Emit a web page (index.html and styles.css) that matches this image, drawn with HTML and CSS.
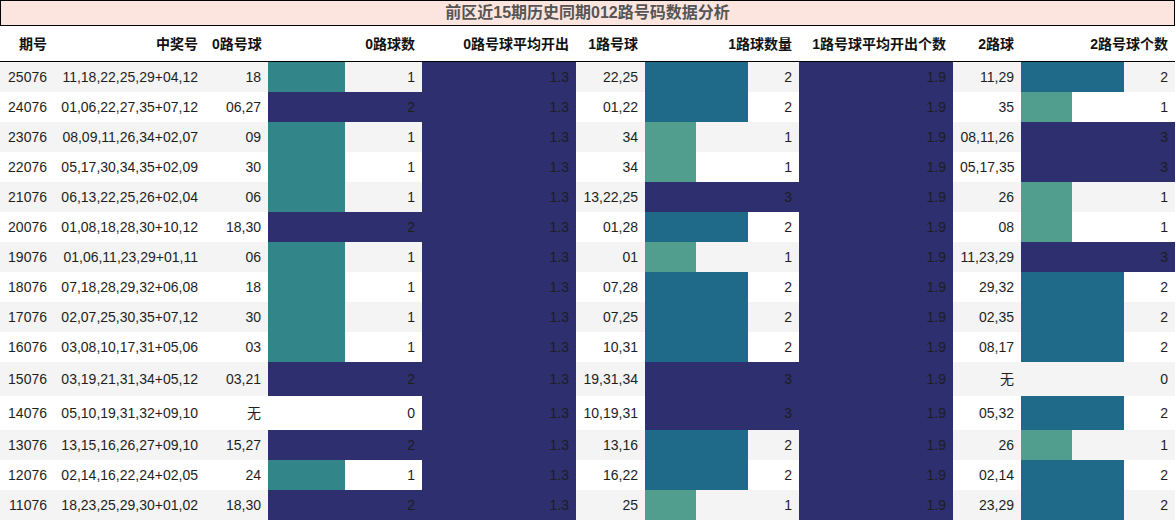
FILE: index.html
```html
<!DOCTYPE html>
<html lang="zh">
<head>
<meta charset="utf-8">
<title>012路号码数据分析</title>
<link rel="stylesheet" href="styles.css">
</head>
<body>
<div class="title">前区近15期历史同期012路号码数据分析</div>
<table class="grid">
  <colgroup>
    <col class="c-issue"><col class="c-nums"><col class="c-road"><col class="c-bar"><col class="c-bar">
    <col class="c-road1"><col class="c-bar"><col class="c-bar"><col class="c-road2"><col class="c-bar">
  </colgroup>
  <thead>
    <tr>
      <th>期号</th><th>中奖号</th><th>0路号球</th><th>0路球数</th><th>0路号球平均开出</th>
      <th>1路号球</th><th>1路球数量</th><th>1路号球平均开出个数</th><th>2路球</th><th>2路号球个数</th>
    </tr>
  </thead>
  <tbody>
    <tr><td>25076</td><td>11,18,22,25,29+04,12</td><td>18</td><td class="bar b2-1" style="--w:50%">1</td><td class="bar avg">1.3</td><td>22,25</td><td class="bar b3-2" style="--w:66.67%">2</td><td class="bar avg">1.9</td><td>11,29</td><td class="bar b3-2" style="--w:66.67%">2</td></tr>
    <tr><td>24076</td><td>01,06,22,27,35+07,12</td><td>06,27</td><td class="bar top">2</td><td class="bar avg">1.3</td><td>01,22</td><td class="bar b3-2" style="--w:66.67%">2</td><td class="bar avg">1.9</td><td>35</td><td class="bar b3-1" style="--w:33.33%">1</td></tr>
    <tr><td>23076</td><td>08,09,11,26,34+02,07</td><td>09</td><td class="bar b2-1" style="--w:50%">1</td><td class="bar avg">1.3</td><td>34</td><td class="bar b3-1" style="--w:33.33%">1</td><td class="bar avg">1.9</td><td>08,11,26</td><td class="bar top">3</td></tr>
    <tr><td>22076</td><td>05,17,30,34,35+02,09</td><td>30</td><td class="bar b2-1" style="--w:50%">1</td><td class="bar avg">1.3</td><td>34</td><td class="bar b3-1" style="--w:33.33%">1</td><td class="bar avg">1.9</td><td>05,17,35</td><td class="bar top">3</td></tr>
    <tr><td>21076</td><td>06,13,22,25,26+02,04</td><td>06</td><td class="bar b2-1" style="--w:50%">1</td><td class="bar avg">1.3</td><td>13,22,25</td><td class="bar top">3</td><td class="bar avg">1.9</td><td>26</td><td class="bar b3-1" style="--w:33.33%">1</td></tr>
    <tr><td>20076</td><td>01,08,18,28,30+10,12</td><td>18,30</td><td class="bar top">2</td><td class="bar avg">1.3</td><td>01,28</td><td class="bar b3-2" style="--w:66.67%">2</td><td class="bar avg">1.9</td><td>08</td><td class="bar b3-1" style="--w:33.33%">1</td></tr>
    <tr><td>19076</td><td>01,06,11,23,29+01,11</td><td>06</td><td class="bar b2-1" style="--w:50%">1</td><td class="bar avg">1.3</td><td>01</td><td class="bar b3-1" style="--w:33.33%">1</td><td class="bar avg">1.9</td><td>11,23,29</td><td class="bar top">3</td></tr>
    <tr><td>18076</td><td>07,18,28,29,32+06,08</td><td>18</td><td class="bar b2-1" style="--w:50%">1</td><td class="bar avg">1.3</td><td>07,28</td><td class="bar b3-2" style="--w:66.67%">2</td><td class="bar avg">1.9</td><td>29,32</td><td class="bar b3-2" style="--w:66.67%">2</td></tr>
    <tr><td>17076</td><td>02,07,25,30,35+07,12</td><td>30</td><td class="bar b2-1" style="--w:50%">1</td><td class="bar avg">1.3</td><td>07,25</td><td class="bar b3-2" style="--w:66.67%">2</td><td class="bar avg">1.9</td><td>02,35</td><td class="bar b3-2" style="--w:66.67%">2</td></tr>
    <tr><td>16076</td><td>03,08,10,17,31+05,06</td><td>03</td><td class="bar b2-1" style="--w:50%">1</td><td class="bar avg">1.3</td><td>10,31</td><td class="bar b3-2" style="--w:66.67%">2</td><td class="bar avg">1.9</td><td>08,17</td><td class="bar b3-2" style="--w:66.67%">2</td></tr>
    <tr class="tall"><td>15076</td><td>03,19,21,31,34+05,12</td><td>03,21</td><td class="bar top">2</td><td class="bar avg">1.3</td><td>19,31,34</td><td class="bar top">3</td><td class="bar avg">1.9</td><td>无</td><td>0</td></tr>
    <tr class="tall"><td>14076</td><td>05,10,19,31,32+09,10</td><td>无</td><td>0</td><td class="bar avg">1.3</td><td>10,19,31</td><td class="bar top">3</td><td class="bar avg">1.9</td><td>05,32</td><td class="bar b3-2" style="--w:66.67%">2</td></tr>
    <tr><td>13076</td><td>13,15,16,26,27+09,10</td><td>15,27</td><td class="bar top">2</td><td class="bar avg">1.3</td><td>13,16</td><td class="bar b3-2" style="--w:66.67%">2</td><td class="bar avg">1.9</td><td>26</td><td class="bar b3-1" style="--w:33.33%">1</td></tr>
    <tr><td>12076</td><td>02,14,16,22,24+02,05</td><td>24</td><td class="bar b2-1" style="--w:50%">1</td><td class="bar avg">1.3</td><td>16,22</td><td class="bar b3-2" style="--w:66.67%">2</td><td class="bar avg">1.9</td><td>02,14</td><td class="bar b3-2" style="--w:66.67%">2</td></tr>
    <tr><td>11076</td><td>18,23,25,29,30+01,02</td><td>18,30</td><td class="bar top">2</td><td class="bar avg">1.3</td><td>25</td><td class="bar b3-1" style="--w:33.33%">1</td><td class="bar avg">1.9</td><td>23,29</td><td class="bar b3-2" style="--w:66.67%">2</td></tr>
  </tbody>
</table>
</body>
</html>
```
FILE: styles.css
```css
html, body {
  margin: 0;
  padding: 0;
  background: #ffffff;
}

body {
  font-family: "Liberation Sans", "Noto Sans CJK SC", sans-serif;
  color: #1e1e1e;
  width: 1176px;
}

.title {
  box-sizing: border-box;
  width: 1175px;
  height: 26px;
  border: 1px solid #000;
  background: #fde5df;
  color: #555555;
  font-size: 16px;
  font-weight: bold;
  line-height: 24px;
  text-align: center;
}

.grid {
  width: 1175px;
  table-layout: fixed;
  border-collapse: separate;
  border-spacing: 0;
  font-size: 14px;
}

.c-issue { width: 54px; }
.c-nums { width: 151px; }
.c-road { width: 63px; }
.c-bar { width: 154px; }
.c-road1 { width: 69px; }
.c-road2 { width: 68px; }

.grid th {
  box-sizing: border-box;
  height: 36px;
  padding: 0 7px;
  border-bottom: 1px solid #000;
  text-align: right;
  font-weight: bold;
  color: #111;
  line-height: 18px;
  white-space: nowrap;
  vertical-align: middle;
}

.grid td {
  box-sizing: border-box;
  height: 30px;
  padding: 0 7px;
  text-align: right;
  line-height: 18px;
  white-space: nowrap;
  vertical-align: middle;
}

.grid tbody tr:nth-child(odd) { background: #f4f4f4; }
.grid tbody tr:nth-child(even) { background: #ffffff; }

.grid tbody tr.tall td { height: 34px; }

.bar {
  --w: 100%;
  --c: #2d2f6f;
  background: linear-gradient(to right, var(--c) var(--w), transparent var(--w));
}

.bar.avg, .bar.top { --c: #2d2f6f; }
.bar.b2-1 { --c: #32868a; }
.bar.b3-2 { --c: #1f6a89; }
.bar.b3-1 { --c: #519e8f; }
```
